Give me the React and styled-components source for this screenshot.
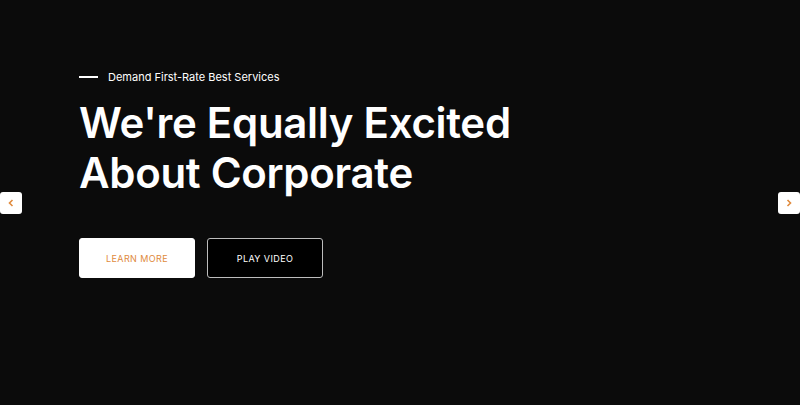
import React from "react";
import styled, { createGlobalStyle } from "styled-components";

const GlobalStyle = createGlobalStyle`
  html, body {
    margin: 0;
    padding: 0;
    background: #0b0b0b;
  }
  body {
    font-family: Inter, "Noto Sans", sans-serif;
  }
`;

const Hero = styled.section`
  position: relative;
  width: 800px;
  height: 405px;
  background: #0b0b0b;
  display: flex;
  flex-direction: column;
  padding: 70px 0 0 79px;
  box-sizing: border-box;
`;

const Tagline = styled.div`
  display: flex;
  align-items: center;
  gap: 10px;
  color: #ffffff;
  font-size: 11px;
  line-height: 14px;
  font-weight: 400;

  &::before {
    content: "";
    width: 19px;
    height: 2px;
    background: #ffffff;
  }
`;

const Title = styled.h1`
  margin: 14px 0 0;
  color: #ffffff;
  font-size: 42px;
  line-height: 50px;
  font-weight: 600;
  letter-spacing: -0.3px;
`;

const Actions = styled.div`
  display: flex;
  gap: 12px;
  margin-top: 40px;
`;

const Button = styled.button`
  width: 116px;
  height: 40px;
  border-radius: 3px;
  font-family: inherit;
  font-size: 9px;
  letter-spacing: 0.4px;
  text-transform: uppercase;
  cursor: pointer;
  background: ${(p) => (p.$light ? "#ffffff" : "#000000")};
  color: ${(p) => (p.$light ? "#e08a3c" : "#ffffff")};
  border: 1px solid ${(p) => (p.$light ? "#ffffff" : "#bdbdbd")};
`;

const Arrow = styled.button`
  position: absolute;
  top: 192px;
  ${(p) => (p.$side === "left" ? "left: 0;" : "right: 0;")}
  width: 22px;
  height: 22px;
  padding: 0;
  border: none;
  border-radius: 3px;
  background: #ffffff;
  display: flex;
  align-items: center;
  justify-content: center;
  cursor: pointer;
`;

function Chevron({ dir }) {
  return (
    <svg width="8" height="8" viewBox="0 0 8 8">
      <path
        d={dir === "left" ? "M5.5 1 L2.5 4 L5.5 7" : "M2.5 1 L5.5 4 L2.5 7"}
        fill="none"
        stroke="#e08a3c"
        strokeWidth="1.6"
      />
    </svg>
  );
}

export default function App() {
  return (
    <>
      <GlobalStyle />
      <Hero>
        <Tagline>Demand First-Rate Best Services</Tagline>
        <Title>
          We're Equally Excited
          <br />
          About Corporate
        </Title>
        <Actions>
          <Button $light>Learn More</Button>
          <Button>Play Video</Button>
        </Actions>
        <Arrow $side="left" aria-label="Previous">
          <Chevron dir="left" />
        </Arrow>
        <Arrow $side="right" aria-label="Next">
          <Chevron dir="right" />
        </Arrow>
      </Hero>
    </>
  );
}
